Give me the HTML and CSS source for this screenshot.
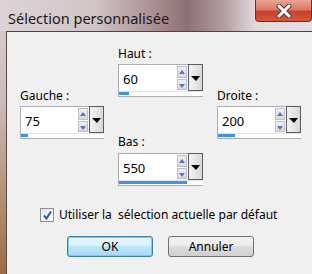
FILE: index.html
```html
<!DOCTYPE html>
<html lang="fr">
<head>
    <meta charset="UTF-8">
    <title>Sélection personnalisée</title>
    <link rel="stylesheet" href="styles.css">
</head>
<body>
    <div class="window">
        <div class="titlebar">
            <span class="title">Sélection personnalisée</span>
            <button class="close" title="Fermer">
                <svg width="18" height="14" viewBox="0 0 18 14">
                    <path d="M4 2 L14 12 M14 2 L4 12" stroke="#5a3a36" stroke-width="5" stroke-linecap="round"/>
                    <path d="M4 2 L14 12 M14 2 L4 12" stroke="#fff" stroke-width="3" stroke-linecap="round"/>
                </svg>
            </button>
        </div>
        <div class="client">
            <div class="fields">
                <!-- left -->
                <div class="col col-side">
                    <label>Gauche :</label>
                    <div class="spin">
                        <div class="spin-row">
                            <span class="value">75</span>
                            <div class="updown">
                                <span class="arrow up"></span>
                                <span class="arrow down"></span>
                            </div>
                            <span class="drop"></span>
                        </div>
                        <div class="bar"><span style="width:7px"></span></div>
                    </div>
                </div>
                <!-- middle -->
                <div class="col">
                    <label>Haut :</label>
                    <div class="spin">
                        <div class="spin-row">
                            <span class="value">60</span>
                            <div class="updown">
                                <span class="arrow up"></span>
                                <span class="arrow down"></span>
                            </div>
                            <span class="drop"></span>
                        </div>
                        <div class="bar"><span style="width:10px"></span></div>
                    </div>
                    <label class="label-low">Bas :</label>
                    <div class="spin">
                        <div class="spin-row">
                            <span class="value">550</span>
                            <div class="updown">
                                <span class="arrow up"></span>
                                <span class="arrow down"></span>
                            </div>
                            <span class="drop"></span>
                        </div>
                        <div class="bar"><span style="width:68px"></span></div>
                    </div>
                </div>
                <!-- right -->
                <div class="col col-side">
                    <label>Droite :</label>
                    <div class="spin">
                        <div class="spin-row">
                            <span class="value">200</span>
                            <div class="updown">
                                <span class="arrow up"></span>
                                <span class="arrow down"></span>
                            </div>
                            <span class="drop"></span>
                        </div>
                        <div class="bar"><span style="width:17px"></span></div>
                    </div>
                </div>
            </div>

            <label class="check">
                <span class="box">
                    <svg width="11" height="11" viewBox="0 0 11 11">
                        <path d="M2 5.5 L4.5 8.5 L9 1.5" fill="none" stroke="#2c5fa8" stroke-width="2"/>
                    </svg>
                </span>
                Utiliser la &nbsp;sélection actuelle par défaut
            </label>

            <div class="buttons">
                <button class="btn btn-default">OK</button>
                <button class="btn">Annuler</button>
            </div>
        </div>
    </div>
</body>
</html>
```

FILE: styles.css
```css
body { margin: 0; width: 312px; height: 274px; overflow: hidden; font-family: "Noto Sans", "Open Sans", sans-serif; font-size: 12px; color: #000;
    background: linear-gradient(180deg, #d9cfd2 0%, #cdbdbd 35%, #b79a82 65%, #9a6d45 100%); }
.window { display: flex; flex-direction: column; height: 274px; }

.titlebar { height: 31px; display: flex; justify-content: space-between; align-items: flex-start;
    background: linear-gradient(90deg, #ddd3d6 0%, #d2c5c8 30%, #a88d90 50%, #8d7074 60%, #b39fa3 72%, #e2d9dc 82%, #e6dfe2 100%); }
.title { padding: 8px 0 0 8px; font-size: 14.5px; color: #1a1a1a; }
.close { width: 57px; height: 22px; margin: 0; padding: 0; border: 1px solid #6e2e26; border-top: none; border-radius: 0 0 4px 4px;
    background: linear-gradient(180deg, #eba595 0%, #dc7862 45%, #c7412a 55%, #d3573d 100%);
    display: flex; align-items: center; justify-content: center; }

.client { flex: 1; margin-left: 6px; background: #f0f0f0; border-top: 1px solid #4b4446; border-left: 1px solid #5a4a40; }

.fields { display: grid; grid-template-columns: 84px 85px 84px; column-gap: 14px; padding: 14px 0 0 13px; }
.col { display: flex; flex-direction: column; }
.col-side { padding-top: 42px; }
label { line-height: 16px; display: block; margin-bottom: 2px; }
.label-low { margin-top: 37px; margin-bottom: 3px; }

.spin { height: 33px; display: flex; flex-direction: column; background: #fff; border: 1px solid #abadb3; border-right: none; box-sizing: border-box; }
.spin-row { flex: 1; display: flex; }
.value { flex: 1; padding: 5px 0 0 4px; font-size: 13px; }
.updown { width: 10px; display: flex; flex-direction: column; gap: 1px; padding: 1px 0; margin-right: 1px; }
.arrow { flex: 1; background: linear-gradient(180deg, #eef0f4, #d6dbe4); border: 1px solid #b9bec8; position: relative; }
.arrow::after { content: ""; position: absolute; left: 1px; border-left: 3px solid transparent; border-right: 3px solid transparent; }
.arrow.up::after { top: 3px; border-bottom: 4px solid #5d74a8; }
.arrow.down::after { top: 4px; border-top: 4px solid #5d74a8; }
.drop { width: 13px; margin-top: -1px; background: linear-gradient(90deg, #f4f4f4, #d8d8d8); border: 1px solid #5c5c5c; position: relative; }
.drop::after { content: ""; position: absolute; top: 11px; left: 2px; border-left: 5px solid transparent; border-right: 4px solid transparent; border-top: 5px solid #000; }
.bar { height: 4px; border-top: 1px solid #e4e4e4; }
.bar span { display: block; height: 3px; background: #3f93e6; }

.check { display: flex; align-items: center; gap: 5px; padding: 21px 0 0 33px; line-height: 16px; margin: 0; }
.box { width: 12px; height: 12px; border: 1px solid #8e8f8f; background: linear-gradient(135deg, #dfe3e8, #fff); display: flex; align-items: center; justify-content: center; }

.buttons { display: flex; gap: 15px; padding: 13px 0 0 60px; }
.btn { width: 86px; height: 21px; font-family: inherit; font-size: 12px; border: 1px solid #707070; border-radius: 3px;
    background: linear-gradient(180deg, #f2f2f2 0%, #ebebeb 50%, #dddddd 50%, #cfcfcf 100%); padding: 0; }
.btn-default { border-color: #3c7fb1; background: linear-gradient(180deg, #eaf6fd 0%, #d9f0fc 50%, #bee6fd 50%, #a7d9f5 100%); box-shadow: inset 0 0 0 1px #6fd0f0; }
```
